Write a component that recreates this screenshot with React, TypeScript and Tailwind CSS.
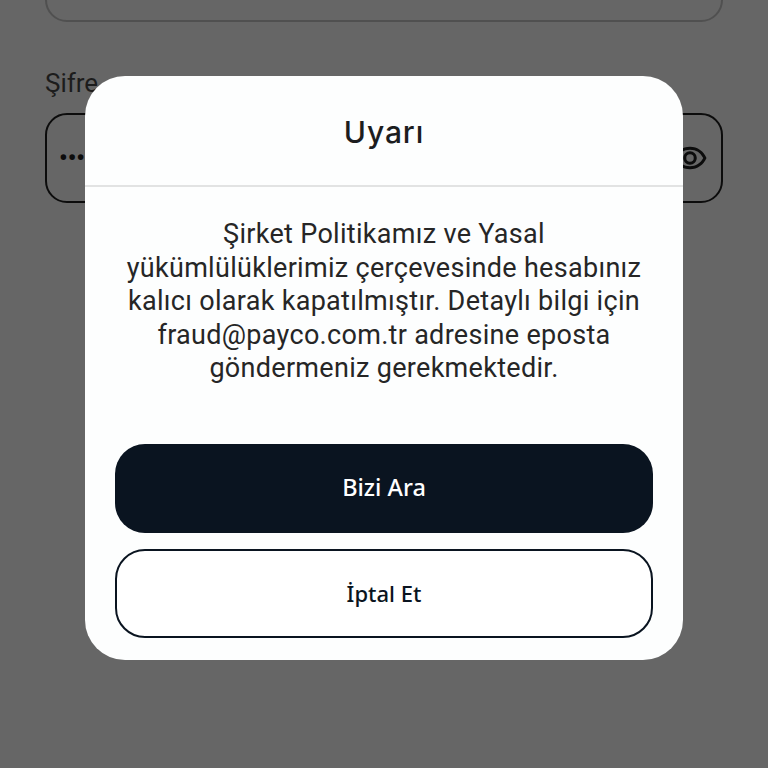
import { MdOutlineRemoveRedEye } from "react-icons/md";

function LoginForm() {
  return (
    <div className="flex flex-col px-[45px]">
      <div className="mt-[-68px] h-[90px] rounded-[22px] border-2 border-[#505050]" />
      <label className="mt-[46px] text-[26px] leading-[30px] text-[#1c1c1c]">Şifre</label>
      <div className="mt-[15px] flex h-[90px] items-center justify-between rounded-[22px] border-2 border-[#0c0c0c] pr-[13px] pl-[12px]">
        <span className="text-[24px] leading-none font-bold text-[#0c0c0c]">•••</span>
        <MdOutlineRemoveRedEye className="h-[36px] w-[36px] text-[#0c0c0c]" />
      </div>
    </div>
  );
}

function AlertModal() {
  return (
    <div className="absolute top-[76px] left-[85px] flex h-[584px] w-[598px] flex-col rounded-[40px] bg-[#fdfefe]">
      <div className="flex h-[111px] items-center justify-center border-b-2 border-[#e2e3e3] pt-[3px]">
        <h2 className="font-['Inter',sans-serif] text-[30px] font-medium tracking-[0.9px] text-[#1c1d1f]">Uyarı</h2>
      </div>
      <p className="mt-[31px] px-[30px] text-center text-[27px] leading-[33.5px] tracking-[0.3px] text-[#262626]">
        Şirket Politikamız ve Yasal yükümlülüklerimiz çerçevesinde hesabınız kalıcı olarak kapatılmıştır. Detaylı bilgi için fraud@payco.com.tr adresine eposta göndermeniz gerekmektedir.
      </p>
      <div className="mt-[58px] flex flex-col gap-[16px] px-[30px]">
        <button className="h-[89px] rounded-[30px] bg-[#0a1420] font-['Noto_Sans',sans-serif] text-[23.5px] font-medium text-white">Bizi Ara</button>
        <button className="h-[89px] rounded-[30px] border-2 border-[#0a1420] bg-white font-['Noto_Sans',sans-serif] text-[22px] font-medium text-[#0a1420]">İptal Et</button>
      </div>
    </div>
  );
}

export default function App() {
  return (
    <div className="relative h-[768px] w-[768px] overflow-hidden bg-[#666666] font-['Roboto',sans-serif]">
      <LoginForm />
      <AlertModal />
    </div>
  );
}
